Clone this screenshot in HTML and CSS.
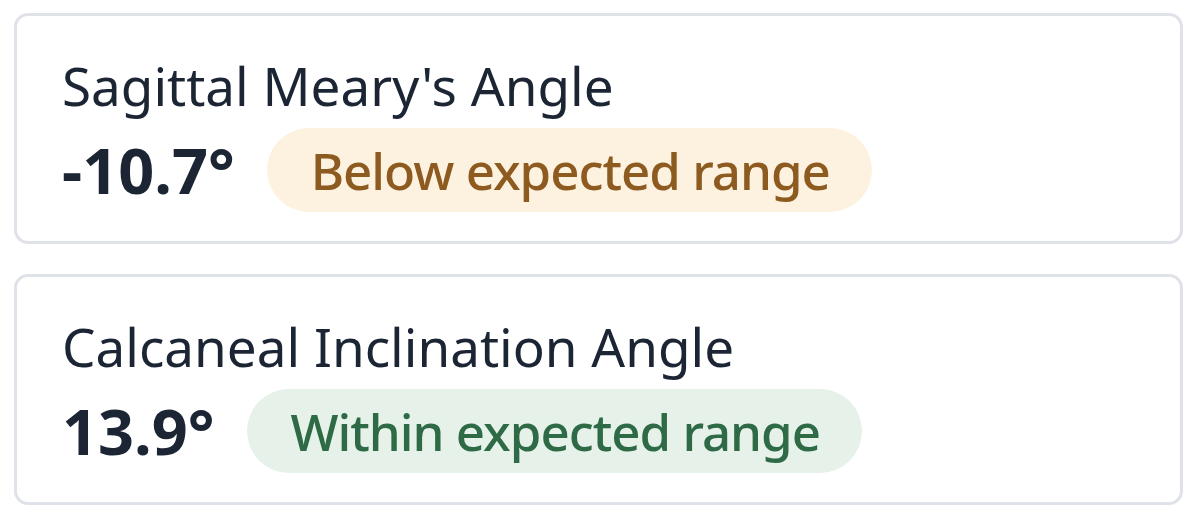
FILE: index.html
```html
<!DOCTYPE html>
<html lang="en">
<head>
<meta charset="utf-8">
<title>Measurements</title>
<link rel="stylesheet" href="styles.css">
</head>
<body>
<main class="list">
  <section class="card">
    <h2 class="card-title">Sagittal Meary's Angle</h2>
    <div class="card-row">
      <span class="value">-10.7°</span>
      <span class="badge badge-low">Below expected range</span>
    </div>
  </section>
  <section class="card">
    <h2 class="card-title">Calcaneal Inclination Angle</h2>
    <div class="card-row">
      <span class="value">13.9°</span>
      <span class="badge badge-ok">Within expected range</span>
    </div>
  </section>
</main>
</body>
</html>
```
FILE: styles.css
```css
html, body {
  margin: 0;
  padding: 0;
  background: #ffffff;
}

body {
  font-family: "Noto Sans", "Open Sans", sans-serif;
  color: #1c2534;
}

.list {
  display: flex;
  flex-direction: column;
  gap: 30px;
  padding: 13px 17px 0 14px;
}

.card {
  border: 3px solid #dfe2e8;
  border-radius: 14px;
  padding: 38px 45px 29px;
  display: flex;
  flex-direction: column;
  gap: 10px;
}

.card-title {
  margin: 0;
  font-size: 53px;
  font-weight: 400;
  line-height: 64px;
}

.card-row {
  display: flex;
  align-items: center;
  gap: 32px;
}

.value {
  font-size: 63px;
  font-weight: 700;
  line-height: 84px;
}

.badge {
  display: inline-flex;
  align-items: center;
  height: 84px;
  padding: 0 42px 0 44px;
  border-radius: 42px;
  font-size: 51px;
  font-weight: 500;
  letter-spacing: -1px;
}

.badge-low {
  background: #fdf2e0;
  color: #8d5a20;
}

.badge-ok {
  background: #e6f1ea;
  color: #2e6a45;
}
```
